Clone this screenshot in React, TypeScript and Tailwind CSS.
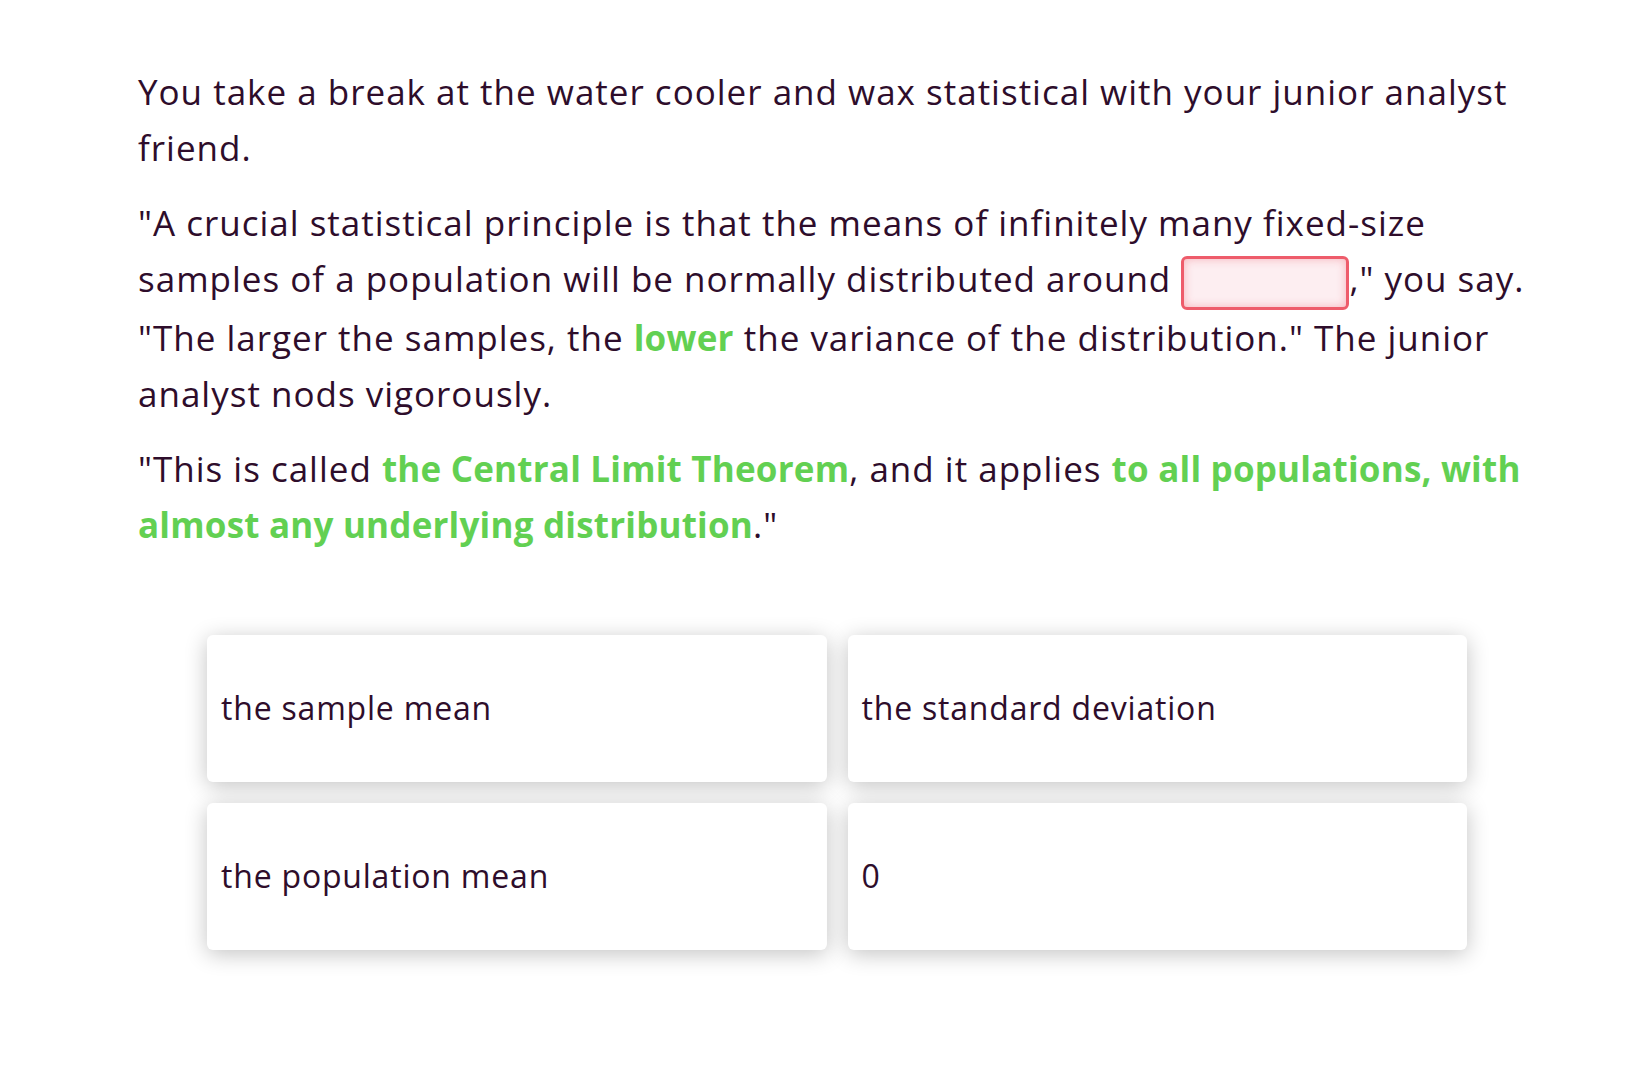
const INK = "text-[#2e0d2b]";
const GREEN = "font-bold tracking-[0.2px] text-[#62d052]";

function Choice({ label }: { label: string }) {
  return (
    <button
      type="button"
      className={`flex h-[147px] items-center rounded-[6px] bg-white px-[14px] text-left text-[32px] tracking-[0.8px] ${INK} shadow-[0_4px_22px_rgba(0,0,0,0.24)]`}
    >
      {label}
    </button>
  );
}

export default function App() {
  return (
    <div className="min-h-[1066px] bg-white font-['Open_Sans','Liberation_Sans',sans-serif]">
      <div className={`ml-[138px] w-[1410px] pt-[64px] text-[35px] leading-[56px] tracking-[1px] ${INK}`}>
        <p>
          You take a break at the water cooler and wax statistical with your junior analyst friend.
        </p>
        <p className="mt-[19px]">
          "A crucial statistical principle is that the means of infinitely many fixed-size samples of a
          population will be normally distributed around{" "}
          <span className="inline-block h-[54px] w-[168px] rounded-[6px] border-[3px] border-[#ee5c6b] bg-[#fdeef1] align-middle shadow-[inset_0_0_10px_rgba(238,92,107,0.4)]" />
          ," you say. "The larger the samples, the <span className={GREEN}>lower</span> the variance of
          the distribution." The junior analyst nods vigorously.
        </p>
        <p className="mt-[19px]">
          "This is called <span className={GREEN}>the Central Limit Theorem</span>, and it applies{" "}
          <span className={GREEN}>to all populations, with almost any underlying distribution</span>."
        </p>
      </div>
      <div className="ml-[207px] mt-[82px] grid w-[1260px] grid-cols-2 gap-[21px]">
        <Choice label="the sample mean" />
        <Choice label="the standard deviation" />
        <Choice label="the population mean" />
        <Choice label="0" />
      </div>
    </div>
  );
}
